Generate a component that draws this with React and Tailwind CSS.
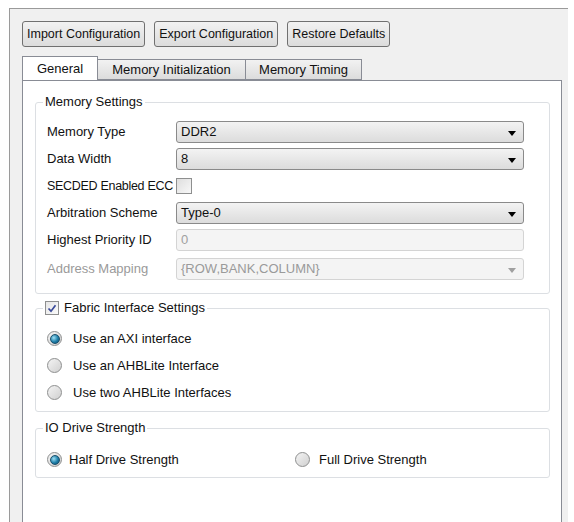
import React from "react";

const font = { fontFamily: '"Liberation Sans", Arial, sans-serif' };

function Btn({ children }) {
  return (
    <button className="h-[26px] px-[4px] rounded-[3px] border border-[#707070] bg-gradient-to-b from-[#f2f2f2] to-[#dcdcdc] text-[12.5px] text-[#111] leading-none whitespace-nowrap">
      {children}
    </button>
  );
}

function Tab({ label, active, w }) {
  if (active) {
    return (
      <div className={`${w} h-[24px] -mb-px bg-white border border-b-0 border-[#898c95] flex items-center justify-center text-[13px] text-[#111] z-10`}>
        {label}
      </div>
    );
  }
  return (
    <div className={`${w} h-[21px] mt-[3px] -ml-px border border-[#898c95] bg-gradient-to-b from-[#f2f2f2] to-[#dcdcdc] flex items-center justify-center text-[13px] text-[#111]`}>
      {label}
    </div>
  );
}

function Arrow({ disabled }) {
  return (
    <svg width="8" height="5" viewBox="0 0 8 5" className="absolute right-[7px] top-[9px]">
      <path d="M0 0 H8 L4 5 Z" fill={disabled ? "#a0a0a0" : "#000"} />
    </svg>
  );
}

function Combo({ value, disabled }) {
  if (disabled) {
    return (
      <div className="relative h-[22px] w-[348px] rounded-[3px] border border-[#d4d4d4] bg-[#f4f4f4] pl-[4px] flex items-center text-[13px] text-[#9a9a9a]">
        {value}
        <Arrow disabled />
      </div>
    );
  }
  return (
    <div className="relative h-[22px] w-[348px] rounded-[3px] border border-[#8a8a8a] bg-gradient-to-b from-[#f3f3f3] to-[#dcdcdc] pl-[4px] flex items-center text-[13px] text-[#111]">
      {value}
      <Arrow />
    </div>
  );
}

function Row({ label, children, dim, tight }) {
  return (
    <div className="flex items-center">
      <div className={`w-[129px] whitespace-nowrap ${tight ? "text-[12.5px] tracking-[-0.3px]" : "text-[13px]"} ${dim ? "text-[#9a9a9a]" : "text-[#111]"}`}>{label}</div>
      {children}
    </div>
  );
}

function Radio({ checked }) {
  return (
    <div className="w-[15px] h-[15px] rounded-full border border-[#8e8f8f] bg-gradient-to-br from-[#f4f4f4] to-[#d0d0d0] flex items-center justify-center shrink-0">
      {checked && (
        <div className="w-[10px] h-[10px] rounded-full bg-[radial-gradient(circle_at_35%_35%,#9fe0f5,#1d7ea8_55%,#0a4d6e)] border border-[#1b4f6b]" />
      )}
    </div>
  );
}

function Group({ title, children, className }) {
  return (
    <div className={`relative border border-[#dcdfe3] rounded-[3px] ${className}`}>
      <div className="absolute -top-[9px] left-[7px] bg-white px-[2px] text-[13px] text-[#111] leading-[16px] flex items-center whitespace-nowrap">
        {title}
      </div>
      {children}
    </div>
  );
}

export default function App() {
  return (
    <div className="w-[574px] h-[522px] bg-white overflow-hidden" style={font}>
      <div className="ml-[9px] mt-[8px] w-[559px] h-[514px] bg-[#f0f0f0] border-t border-l border-[#9a9a9a] pt-[12px] pl-[12px]">
        <div className="flex gap-[9px]">
          <Btn>Import Configuration</Btn>
          <Btn>Export Configuration</Btn>
          <Btn>Restore Defaults</Btn>
        </div>

        <div className="flex items-start mt-[9px] relative">
          <Tab label="General" active w="w-[76px]" />
          <Tab label="Memory Initialization" w="w-[149px]" />
          <Tab label="Memory Timing" w="w-[117px]" />
        </div>

        <div className="w-[540px] h-[460px] bg-white border border-[#898c95] pt-[21px] pl-[12px]">
          <Group title="Memory Settings" className="w-[515px] h-[192px]">
            <div className="pl-[11px] pt-[18px] flex flex-col gap-[5px]">
              <Row label="Memory Type"><Combo value="DDR2" /></Row>
              <Row label="Data Width"><Combo value="8" /></Row>
              <Row label="SECDED Enabled ECC" tight>
                <div className="w-[16px] h-[16px] border border-[#8e8f8f] bg-gradient-to-br from-[#dedede] to-[#f8f8f8] my-[3px]" />
              </Row>
              <Row label="Arbitration Scheme"><Combo value="Type-0" /></Row>
              <Row label="Highest Priority ID">
                <div className="h-[22px] w-[348px] rounded-[3px] border border-[#d4d4d4] bg-[#f4f4f4] pl-[4px] flex items-center text-[13px] text-[#a0a0a0]">0</div>
              </Row>
              <div className="mt-[2px]">
                <Row label="Address Mapping" dim><Combo value="{ROW,BANK,COLUMN}" disabled /></Row>
              </div>
            </div>
          </Group>

          <Group
            className="w-[515px] h-[104px] mt-[14px]"
            title={
              <>
                <span className="w-[14px] h-[14px] border border-[#8e8f8f] bg-gradient-to-br from-[#e6e6e6] to-[#fafafa] flex items-center justify-center mr-[5px]">
                  <svg width="10" height="9" viewBox="0 0 10 9">
                    <path d="M1.5 4.5 L4 7.2 L8.5 1.2" fill="none" stroke="#3a4a9a" strokeWidth="1.7" />
                  </svg>
                </span>
                Fabric Interface Settings
              </>
            }
          >
            <div className="pl-[11px] pt-[22px] flex flex-col gap-[12px]">
              {[
                ["Use an AXI interface", true],
                ["Use an AHBLite Interface", false],
                ["Use two AHBLite Interfaces", false],
              ].map(([t, c]) => (
                <div key={t} className="flex items-center gap-[11px] text-[13px] text-[#111] h-[15px]">
                  <Radio checked={c} />
                  {t}
                </div>
              ))}
            </div>
          </Group>

          <Group title="IO Drive Strength" className="w-[515px] h-[50px] mt-[16px]">
            <div className="pl-[11px] pt-[21px] flex items-center text-[13px] text-[#111]">
              <div className="flex items-center gap-[7px] w-[248px]">
                <Radio checked />
                Half Drive Strength
              </div>
              <div className="flex items-center gap-[9px]">
                <Radio />
                Full Drive Strength
              </div>
            </div>
          </Group>
        </div>
      </div>
    </div>
  );
}
